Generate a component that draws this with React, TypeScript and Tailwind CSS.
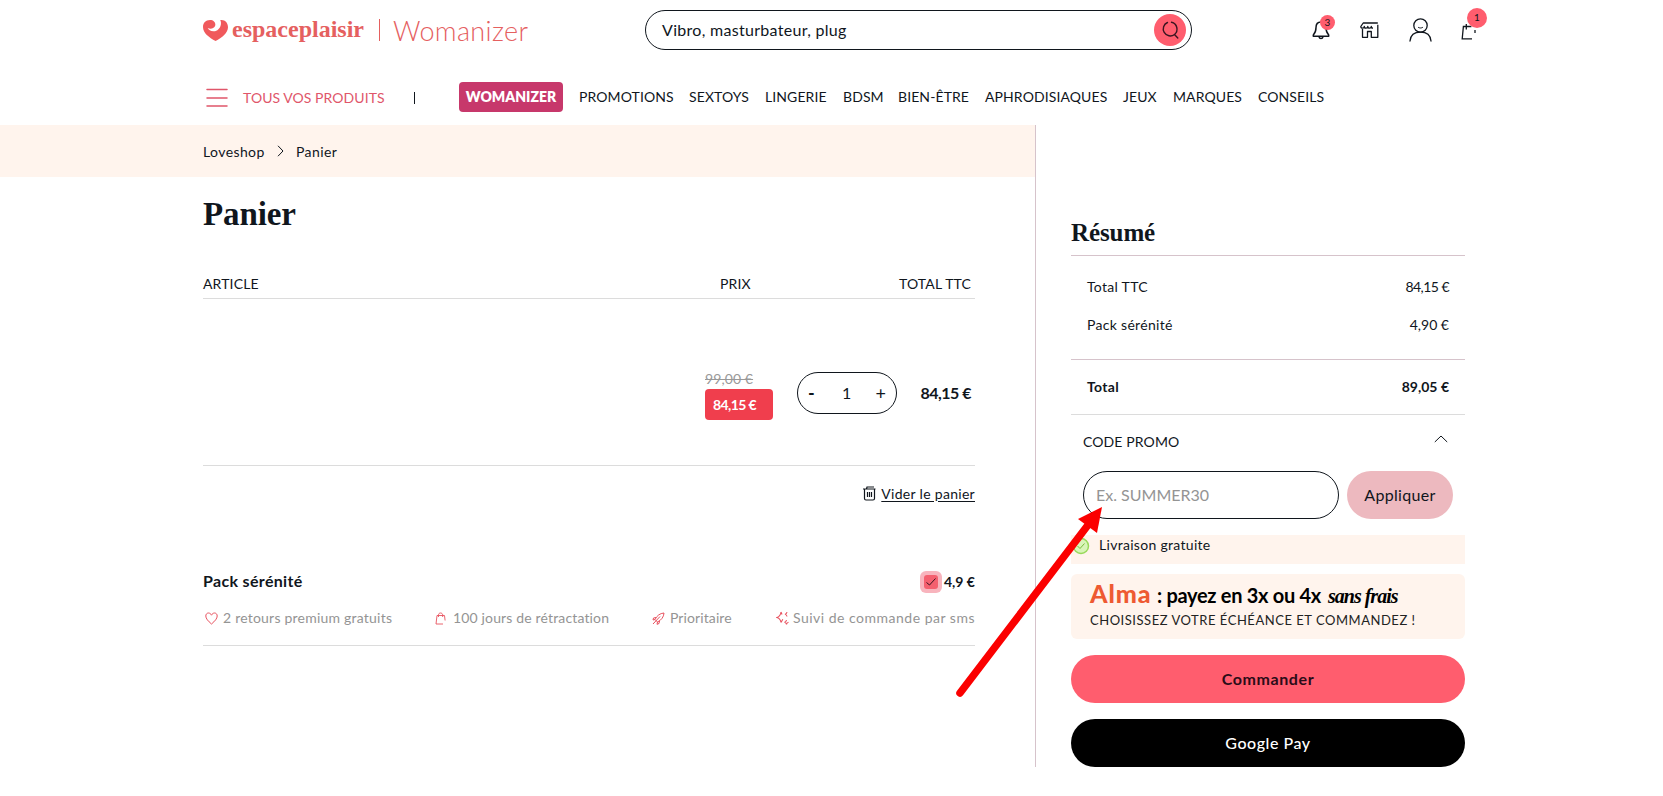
import type { ReactNode } from "react";

interface NavItem {
  label: string;
  width: string;
}

const navItems: NavItem[] = [
  { label: "PROMOTIONS", width: "w-[110px]" },
  { label: "SEXTOYS", width: "w-[76px]" },
  { label: "LINGERIE", width: "w-[78px]" },
  { label: "BDSM", width: "w-[55px]" },
  { label: "BIEN-ÊTRE", width: "w-[87px]" },
  { label: "APHRODISIAQUES", width: "w-[138px]" },
  { label: "JEUX", width: "w-[50px]" },
  { label: "MARQUES", width: "w-[85px]" },
  { label: "CONSEILS", width: "w-[70px]" },
];

const perks: { label: string; style: string; icon: ReactNode }[] = [
  { label: "2 retours premium gratuits", style: "w-[230px] tracking-[0.22px]", icon: <HeartIcon /> },
  { label: "100 jours de rétractation", style: "w-[217px] tracking-[0.15px]", icon: <SmallBagIcon /> },
  { label: "Prioritaire", style: "w-[124px] tracking-[0.1px]", icon: <RocketIcon /> },
  { label: "Suivi de commande par sms", style: "w-[201px] tracking-[0.5px]", icon: <SparklesIcon /> },
];

function Logo() {
  return (
    <div className="flex h-[60px] items-center text-[#e5605f]">
      <svg width="25" height="21" viewBox="0 0 25 21" className="mt-px">
        <path
          fill="#f0595c"
          d="M7 0C2.500 0 0 3.200 0 7c0 6 6 10.500 12.600 14C19 17.500 25 13 25 7.200 25 3.200 22.500 0 18.500 0c-.5 0-.9.1-1.300.3.700 1.100.9 2.400.7 3.900-.6 4.500-4 7.300-7.600 7-2.700-.2-4.700-1.600-5.600-3.300 2.400 1.200 4.900 1 6.500-.6 1.700-1.700 1.500-4.300-.2-5.900C10 .5 8.600 0 7 0Z"
        />
      </svg>
      <span className="ml-[4px] w-[147px] pb-[3px] text-[24px] font-bold whitespace-nowrap [font-family:'Liberation_Serif',serif]">
        espaceplaisir
      </span>
      <span className="h-[22px] w-px bg-[#e5605f]" />
      <span className="ml-[13px] pt-[2px] text-[27px] font-light tracking-[0.35px] whitespace-nowrap">Womanizer</span>
    </div>
  );
}

function BellIcon() {
  return (
    <svg width="18" height="22" viewBox="0 0 18 22" fill="none" stroke="#10161d" strokeWidth="1.500" strokeLinejoin="round">
      <path d="M9 3C5.800 3 4 5.300 4 8.500c0 4-.8 5.500-2.700 7.500v1.300h15.400V16C14.800 14 14 12.500 14 8.500 14 5.300 12.200 3 9 3Z" />
      <path d="M7 18c.3 1 1 1.500 2 1.500s1.700-.5 2-1.500" />
    </svg>
  );
}

function StoreIcon() {
  return (
    <svg width="19" height="17" viewBox="0 0 19 17" fill="none" stroke="#10161d" strokeWidth="1.300" strokeLinejoin="round">
      <path d="M2.500 7v8.300h5V9.500h3.800v5.800h6.500V2.800M17.800 1H3.200L.8 4.500c0 1 .7 1.700 1.700 1.700s1.800-.7 1.800-1.700c0 1 .7 1.700 1.700 1.700s1.800-.7 1.800-1.700c0 1 .7 1.700 1.700 1.700s1.800-.7 1.800-1.700c0 1 .7 1.700 1.700 1.700" />
    </svg>
  );
}

function UserIcon() {
  return (
    <svg width="23" height="24" viewBox="0 0 23 24" fill="none" stroke="#10161d" strokeWidth="1.300" strokeLinecap="round">
      <circle cx="11.500" cy="7.500" r="6.700" />
      <path d="M9.500 9.500c1.200.7 2.800.7 4 0" strokeWidth="1" />
      <path d="M1 23c.5-5.500 4.500-8.800 10.500-8.800S21.500 17.500 22 23" />
    </svg>
  );
}

function BagIcon() {
  return (
    <svg width="16" height="19" viewBox="0 0 16 19" fill="none" stroke="#10161d" strokeWidth="1.300">
      <path d="M11 17.800H1.200L2.400 5.500h8M5.300 8.500V3M14 9v3" />
    </svg>
  );
}

function HeartIcon() {
  return (
    <svg width="13" height="13" viewBox="0 0 13 13" fill="none" stroke="#e8525f" strokeWidth="1">
      <path d="M6.500 12C3 9 .8 6.500.8 4 .8 2.200 2 1 3.500 1c1.300 0 2.400.9 3 2.200C7.100 1.900 8.200 1 9.500 1 11 1 12.200 2.200 12.200 4c0 2.500-2.200 5-5.700 8Z" />
    </svg>
  );
}

function SmallBagIcon() {
  return (
    <svg width="12" height="13" viewBox="0 0 12 13" fill="none" stroke="#e8525f" strokeWidth="0.900">
      <path d="M8 12H1L2 3.500h7.500l.6 5M3.500 5V3c0-1.200.8-2 2-2s2.200.8 2.200 2v2" />
    </svg>
  );
}

function RocketIcon() {
  return (
    <svg width="13" height="13" viewBox="0 0 13 13" fill="none" stroke="#e8525f" strokeWidth="1">
      <path d="M3 7.500C5 3.500 8 1.300 12 1c-.3 4-2.500 7-6.500 9L3 7.500ZM4 5.500 1.500 6 1 8l2-.5M7.500 9 7 11.500l-2 .8.500-2.300M1 12l7-7.500" />
    </svg>
  );
}

function SparklesIcon() {
  return (
    <svg width="14" height="15" viewBox="0 0 14 15" fill="none" stroke="#e8525f" strokeWidth="1.100">
      <path d="M5 1C4.500 4.500 3.500 5.800.8 6.500 3.500 7.200 4.500 8.500 5 11.500M5 1l1 2.500M5 11.500l1.800-3.300M11 1c-.2 1.500-.7 2-2 2.300 1.300.3 1.800.8 2 2.200M10.500 9c-.2 1.500-.7 2-2 2.300 1.300.3 1.800.8 2 2.200.2-1.400.7-1.900 2-2.200" />
    </svg>
  );
}

function Header() {
  return (
    <header className="h-[125px] pl-[203px]">
      <div className="flex h-[60px] items-center">
        <div className="w-[442px]">
          <Logo />
        </div>

        <div className="flex h-10 w-[547px] items-center justify-between rounded-full border border-[#10161d] pr-[5px] pl-4">
          <span className="text-base tracking-[0.3px]">Vibro, masturbateur, plug</span>
          <button className="flex size-8 items-center justify-center rounded-full bg-[#ff5d6e]">
            <svg width="18" height="19" viewBox="0 0 18 19" fill="none" stroke="#3a1520" strokeWidth="1.400" strokeLinecap="round">
              <path d="M6.500 1.500a7 7 0 1 0 7 12M10.500 1.300a7 7 0 0 1 3 12.200l3.300 3.500" />
            </svg>
          </button>
        </div>

        <div className="flex items-center">
          <div className="relative ml-[120px]">
            <BellIcon />
            <span className="absolute -top-[4px] left-[8px] flex size-[15px] items-center justify-center rounded-full bg-[#ff5d6e] text-[10px]">
              3
            </span>
          </div>
          <div className="ml-[30px]">
            <StoreIcon />
          </div>
          <div className="ml-[30px]">
            <UserIcon />
          </div>
          <div className="relative ml-[29px]">
            <BagIcon />
            <span className="absolute -top-[13px] left-[6px] flex size-5 items-center justify-center rounded-full bg-[#ff5d6e] text-[10px]">
              1
            </span>
          </div>
        </div>
      </div>

      <nav className="flex h-[65px] items-center pt-[9px] text-sm whitespace-nowrap">
        <svg width="22" height="20" viewBox="0 0 22 20" stroke="#e0566a" strokeWidth="1.500" strokeLinecap="round" className="mt-px ml-[3px]">
          <path d="M1 1.500h20M1 10h20M1 18h20" />
        </svg>
        <span className="ml-[15px] w-[171px] pt-[2px] tracking-[0.06px] text-[#e0566a]">TOUS VOS PRODUITS</span>
        <span className="mt-[2px] h-3 w-px bg-[#10161d]" />
        <a className="mr-4 ml-[44px] flex h-[30px] w-[104px] items-center justify-center rounded bg-[#c7386b] font-extrabold text-white">
          WOMANIZER
        </a>
        {navItems.map((item) => (
          <a key={item.label} className={`tracking-[0.1px] ${item.width}`}>
            {item.label}
          </a>
        ))}
      </nav>
    </header>
  );
}

function Cart() {
  return (
    <section className="h-[642px] w-[1036px] border-r border-[#d6c3cb]">
      <div className="flex h-[52px] items-center bg-[#fff4ed] pt-[2px] pl-[203px] text-sm tracking-[0.4px]">
        <span className="w-[74px]">Loveshop</span>
        <svg width="7" height="12" viewBox="0 0 7 12" fill="none" stroke="#10161d" className="mb-[2px]">
          <path d="m1 .8 5 5.200-5 5.200" />
        </svg>
        <span className="ml-3">Panier</span>
      </div>

      <div className="ml-[203px] w-[772px]">
        <h1 className="flex h-[72px] items-center pt-[3px] text-[33px] font-bold tracking-[-0.1px] [font-family:'Liberation_Serif',serif]">
          Panier
        </h1>

        <div className="flex h-[50px] items-center border-b border-[#dcdcdc] pt-[21px] text-sm tracking-[0.14px]">
          <span className="w-[517px]">ARTICLE</span>
          <span>PRIX</span>
          <span className="mr-[4px] ml-auto">TOTAL TTC</span>
        </div>

        <div className="flex h-[167px] items-center border-b border-[#dcdcdc] pt-[21px]">
          <div className="mt-[4px] ml-[502px] flex w-[68px] flex-col text-sm">
            <span className="h-5 leading-5 text-[#999]">
              <span className="tracking-[0.1px] line-through">99,00 €</span>
            </span>
            <span className="flex h-[31px] items-center rounded bg-[#f03e4d] pl-2 font-bold tracking-[-0.6px] text-white">
              84,15 €
            </span>
          </div>
          <div className="ml-6 flex h-[42px] w-[100px] items-center justify-between rounded-full border border-[#10161d] px-[10px] text-lg">
            <span className="font-bold">-</span>
            <span className="pl-[3px] text-base">1</span>
            <span>+</span>
          </div>
          <span className="mr-[4px] ml-auto text-base font-bold tracking-[-0.5px]">84,15 €</span>
        </div>

        <div className="flex h-[57px] items-center justify-end pb-[2px]">
          <svg width="13" height="15" viewBox="0 0 13 15" fill="none" stroke="#10161d" strokeWidth="1.200">
            <path d="M0 3h12.500M3.500 3l.5-2h7M1.500 3v9.500c0 .8.500 1.500 1.500 1.500h7c1 0 1.500-.7 1.500-1.500V3M4.500 6v5M6.500 6v5M8.500 6v5" />
          </svg>
          <a className="ml-[5px] text-sm tracking-[0.3px] underline underline-offset-2">Vider le panier</a>
        </div>

        <div className="mt-[47px] flex h-[23px] items-center justify-between">
          <h2 className="pb-[2px] text-base font-bold tracking-[0.33px]">Pack sérénité</h2>
          <div className="flex items-center">
            <span className="flex size-[22px] items-center justify-center rounded-md bg-[#f8b4bd]">
              <span className="flex size-[14px] items-center justify-center rounded-[3px] bg-[#f4606f]">
                <svg width="10" height="8" viewBox="0 0 10 8" fill="none" stroke="#3a1520">
                  <path d="m.5 4.500 3 2.500 6-6.500" />
                </svg>
              </span>
            </span>
            <span className="ml-[2px] text-sm font-bold">4,9 €</span>
          </div>
        </div>

        <div className="flex h-[53px] items-center border-b border-[#dcdcdc] pb-[2px] text-sm text-[#949494]">
          {perks.map((perk) => (
            <div key={perk.label} className={`flex shrink-0 items-center whitespace-nowrap ${perk.style}`}>
              <span className="w-5 pl-[2px]">{perk.icon}</span>
              {perk.label}
            </div>
          ))}
        </div>
      </div>
    </section>
  );
}

function Summary() {
  return (
    <aside className="ml-[35px] w-[394px] text-sm">
      <h2 className="mt-[82px] flex h-[49px] items-center border-b border-[#d6c3cb] pt-[3px] text-[25px] font-bold tracking-[-0.1px] [font-family:'Liberation_Serif',serif]">
        Résumé
      </h2>

      <div className="border-b border-[#d6c3cb] px-4 pt-3 pb-[15px]">
        <div className="flex h-[38px] items-center justify-between">
          <span className="tracking-[0.3px]">Total TTC</span>
          <span className="tracking-[-0.55px]">84,15 €</span>
        </div>
        <div className="flex h-[38px] items-center justify-between">
          <span className="tracking-[0.3px]">Pack sérénité</span>
          <span>4,90 €</span>
        </div>
      </div>

      <div className="flex h-[55px] items-center justify-between border-b border-[#dcdcdc] px-4 font-bold">
        <span className="tracking-[0.3px]">Total</span>
        <span>89,05 €</span>
      </div>

      <div className="px-3 pb-4">
        <div className="flex h-14 items-center justify-between pr-[5px] pb-[2px]">
          <span className="tracking-[0.12px]">CODE PROMO</span>
          <svg width="14" height="8" viewBox="0 0 14 8" fill="none" stroke="#10161d" className="mb-1.5">
            <path d="m.8 7 6.200-6 6.200 6" />
          </svg>
        </div>
        <div className="flex gap-2 text-base">
          <div className="flex h-12 w-[256px] items-center rounded-full border border-[#10161d] pl-3 text-[#949494]">
            Ex. SUMMER30
          </div>
          <button className="h-12 w-[106px] rounded-full bg-[#edb9bf] tracking-[0.33px]">Appliquer</button>
        </div>
      </div>

      <div className="flex h-[29px] items-start bg-[#fff4ed]">
        <svg width="18" height="18" viewBox="0 0 18 18" fill="none" className="mt-[2px] ml-px">
          <circle cx="9" cy="9" r="7.500" fill="#d9f5b9" stroke="#98d95b" strokeWidth="1.500" />
          <path d="m5.500 9 2.500 2.500 4.500-5" stroke="#78bd3b" />
        </svg>
        <span className="ml-[9px] tracking-[0.3px]">Livraison gratuite</span>
      </div>

      <div className="mt-[10px] h-[65px] rounded-md bg-[#fff4ed] pt-[5px] pl-[19px] whitespace-nowrap text-black">
        <div className="flex h-[28px] items-baseline">
          <span className="w-[67px] text-[25px] leading-7 font-black tracking-[0.9px] text-[#ee5a32]">Alma</span>
          <span className="w-[171px] text-xl leading-7 font-bold tracking-[-0.3px]">: payez en 3x ou 4x</span>
          <span className="text-xl leading-7 font-bold tracking-[-1px] italic [font-family:'Liberation_Serif',serif]">
            sans frais
          </span>
        </div>
        <div className="mt-[4px] text-[13px] leading-[18px] tracking-[0.53px] text-[#222]">
          CHOISISSEZ VOTRE ÉCHÉANCE ET COMMANDEZ !
        </div>
      </div>

      <button className="mt-4 block h-12 w-full rounded-full bg-[#ff5d6e] text-base font-bold tracking-[0.6px] text-[#2b0c18]">
        Commander
      </button>
      <button className="mt-4 block h-12 w-full rounded-full bg-black text-base font-medium tracking-[0.55px] text-white">
        Google Pay
      </button>
    </aside>
  );
}

export default function App() {
  return (
    <div className="relative h-[796px] w-[1663px] overflow-hidden bg-white text-[#10161d] [font-family:Lato,sans-serif]">
      <Header />
      <main className="flex items-start">
        <Cart />
        <Summary />
      </main>

      {/* pointer to the promo code field */}
      <svg width="160" height="200" viewBox="0 0 160 200" className="absolute top-[502px] left-[950px]">
        <path d="M10 191 138 23" stroke="#fb0000" strokeWidth="7.500" strokeLinecap="round" />
        <path d="m152 5-24 12 19 14Z" fill="#fb0000" />
      </svg>
    </div>
  );
}
